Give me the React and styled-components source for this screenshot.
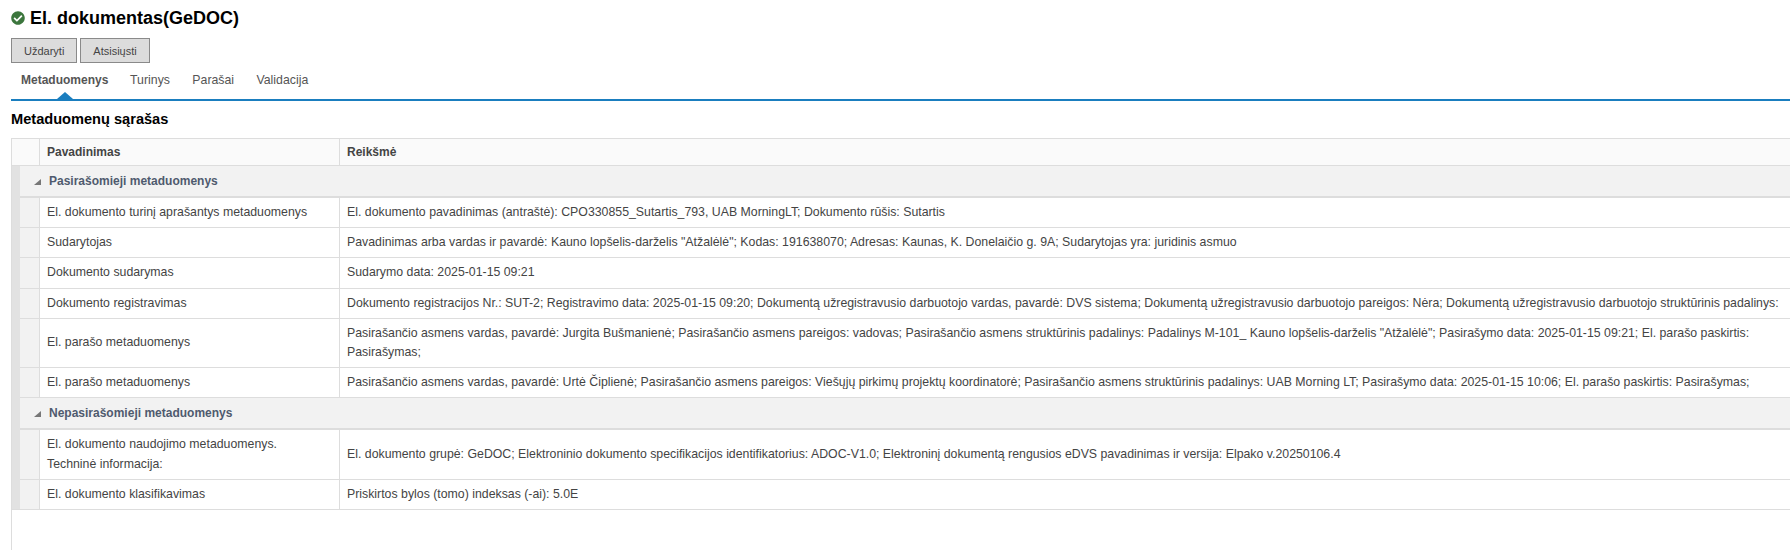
import React from "react";
import styled, { createGlobalStyle } from "styled-components";
import { FaCheckCircle } from "react-icons/fa";

const GlobalStyle = createGlobalStyle`
  html, body {
    margin: 0;
    padding: 0;
    background: #fff;
    overflow: hidden;
  }
  body {
    font-family: "Liberation Sans", Arial, sans-serif;
    font-size: 12.32px;
    color: #444;
  }
`;

const Page = styled.div`
  height: 550px;
  padding-left: 11px;
  display: flex;
  flex-direction: column;
`;

const TitleRow = styled.div`
  display: flex;
  align-items: center;
  gap: 5px;
  height: 24px;
  margin-top: 6px;
  color: #000;
  svg {
    color: #3c763d;
    font-size: 14px;
  }
  h1 {
    margin: 0;
    font-size: 18px;
    line-height: 24px;
    font-weight: bold;
  }
`;

const Toolbar = styled.div`
  display: flex;
  gap: 3px;
  margin-top: 8px;
`;

const Button = styled.button`
  height: 25px;
  padding: 0 12px;
  background: #dcdcdc;
  border: 1px solid #8a8a8a;
  border-radius: 0;
  font-family: inherit;
  font-size: 11px;
  color: #444;
`;

const Tabs = styled.div`
  display: flex;
  height: 36px;
  border-bottom: 2px solid #1a7ebf;
`;

const Tab = styled.div`
  position: relative;
  padding: 8px 11.2px 0;
  line-height: 19px;
  font-size: ${(p) => (p.$active ? "12px" : "12.32px")};
  color: #555;
  font-weight: ${(p) => (p.$active ? "bold" : "normal")};
  &:first-child {
    padding-left: 10px;
    padding-right: 10.5px;
  }
  ${(p) =>
    p.$active &&
    `
    &:after {
      content: "";
      position: absolute;
      left: 50%;
      bottom: 0;
      margin-left: -8px;
      border-left: 8px solid transparent;
      border-right: 8px solid transparent;
      border-bottom: 7px solid #1a7ebf;
    }
  `}
`;

const SectionTitle = styled.h2`
  margin: 10px 0 10px;
  font-size: 14.6px;
  line-height: 17px;
  font-weight: bold;
  color: #000;
`;

const TableBox = styled.div`
  flex: 1;
  border-left: 1px solid #ddd;
  border-top: 1px solid #ddd;
`;

const Table = styled.table`
  width: 100%;
  table-layout: fixed;
  border-collapse: separate;
  border-spacing: 0;
`;

const HeadCell = styled.th`
  height: 26px;
  padding: 0 7px;
  background: #fafafa;
  border-bottom: 1px solid #ddd;
  border-right: 1px solid #ddd;
  text-align: left;
  font-size: 12px;
  font-weight: bold;
  color: #444;
  &:last-child {
    border-right: 0;
  }
`;

const Stripe = styled.td`
  background: #e2e2e2;
  padding: 0;
  border-bottom: ${(p) => (p.$last ? "1px solid #ddd" : "0")};
`;

const Indicator = styled.td`
  background: #f2f2f2;
  padding: 0;
  border-bottom: 1px solid #ddd;
  border-right: 1px solid #ddd;
`;

const GroupCell = styled.td`
  height: 30px;
  padding: 0 0 0 14px;
  background: #f2f2f2;
  border-bottom: 2px solid #ddd;
  font-size: 12px;
  font-weight: bold;
  color: #4f5a6e;
  svg {
    display: inline-block;
    width: 7px;
    height: 7px;
    margin-right: 8px;
    vertical-align: -1px;
  }
`;

const Cell = styled.td`
  padding: 5px 7px;
  line-height: 19.2px;
  font-size: 12.32px;
  color: #444;
  white-space: pre-line;
  border-bottom: 1px solid #ddd;
  border-right: 1px solid #ddd;
  &:last-child {
    border-right: 0;
  }
`;

const groups = [
  {
    name: "Pasirašomieji metaduomenys",
    rows: [
      [
        "El. dokumento turinį aprašantys metaduomenys",
        "El. dokumento pavadinimas (antraštė): CPO330855_Sutartis_793, UAB MorningLT; Dokumento rūšis: Sutartis",
      ],
      [
        "Sudarytojas",
        'Pavadinimas arba vardas ir pavardė: Kauno lopšelis-darželis "Atžalėlė"; Kodas: 191638070; Adresas: Kaunas, K. Donelaičio g. 9A; Sudarytojas yra: juridinis asmuo',
      ],
      ["Dokumento sudarymas", "Sudarymo data: 2025-01-15 09:21"],
      [
        "Dokumento registravimas",
        "Dokumento registracijos Nr.: SUT-2; Registravimo data: 2025-01-15 09:20; Dokumentą užregistravusio darbuotojo vardas, pavardė: DVS sistema; Dokumentą užregistravusio darbuotojo pareigos: Nėra; Dokumentą užregistravusio darbuotojo struktūrinis padalinys:",
      ],
      [
        "El. parašo metaduomenys",
        'Pasirašančio asmens vardas, pavardė: Jurgita Bušmanienė; Pasirašančio asmens pareigos: vadovas; Pasirašančio asmens struktūrinis padalinys: Padalinys M-101_ Kauno lopšelis-darželis "Atžalėlė"; Pasirašymo data: 2025-01-15 09:21; El. parašo paskirtis: Pasirašymas;',
      ],
      [
        "El. parašo metaduomenys",
        "Pasirašančio asmens vardas, pavardė: Urtė Čiplienė; Pasirašančio asmens pareigos: Viešųjų pirkimų projektų koordinatorė; Pasirašančio asmens struktūrinis padalinys: UAB Morning LT; Pasirašymo data: 2025-01-15 10:06; El. parašo paskirtis: Pasirašymas;",
      ],
    ],
  },
  {
    name: "Nepasirašomieji metaduomenys",
    rows: [
      [
        "El. dokumento naudojimo metaduomenys.\nTechninė informacija:",
        "El. dokumento grupė: GeDOC; Elektroninio dokumento specifikacijos identifikatorius: ADOC-V1.0; Elektroninį dokumentą rengusios eDVS pavadinimas ir versija: Elpako v.20250106.4",
      ],
      ["El. dokumento klasifikavimas", "Priskirtos bylos (tomo) indeksas (-ai): 5.0E"],
    ],
  },
];

function App() {
  return (
    <Page>
      <GlobalStyle />
      <TitleRow>
        <FaCheckCircle />
        <h1>El. dokumentas(GeDOC)</h1>
      </TitleRow>
      <Toolbar>
        <Button>Uždaryti</Button>
        <Button>Atsisiųsti</Button>
      </Toolbar>
      <Tabs>
        <Tab $active>Metaduomenys</Tab>
        <Tab>Turinys</Tab>
        <Tab>Parašai</Tab>
        <Tab>Validacija</Tab>
      </Tabs>
      <SectionTitle>Metaduomenų sąrašas</SectionTitle>
      <TableBox>
        <Table>
          <colgroup>
            <col style={{ width: 8 }} />
            <col style={{ width: 20 }} />
            <col style={{ width: 300 }} />
            <col />
          </colgroup>
          <thead>
            <tr>
              <HeadCell colSpan={2} />
              <HeadCell>Pavadinimas</HeadCell>
              <HeadCell>Reikšmė</HeadCell>
            </tr>
          </thead>
          <tbody>
            {groups.map((group, g) => (
              <React.Fragment key={group.name}>
                <tr>
                  <Stripe />
                  <GroupCell colSpan={3}>
                    <svg viewBox="0 0 7 7">
                      <polygon points="7,0 7,6 0,6" fill="#777" />
                    </svg>
                    {group.name}
                  </GroupCell>
                </tr>
                {group.rows.map((row, i) => (
                  <tr key={i}>
                    <Stripe $last={g === groups.length - 1 && i === group.rows.length - 1} />
                    <Indicator />
                    <Cell>{row[0]}</Cell>
                    <Cell>{row[1]}</Cell>
                  </tr>
                ))}
              </React.Fragment>
            ))}
          </tbody>
        </Table>
      </TableBox>
    </Page>
  );
}

export default App;
